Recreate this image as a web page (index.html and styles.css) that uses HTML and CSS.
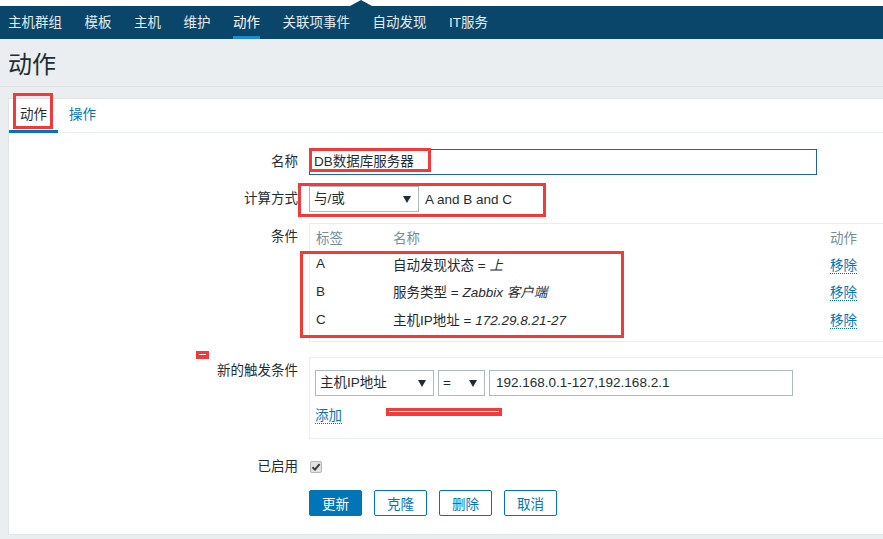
FILE: index.html
```html
<!DOCTYPE html>
<html lang="zh-CN">
<head>
    <meta charset="UTF-8">
    <title>动作</title>
    <link rel="stylesheet" href="styles.css">
</head>
<body>
    <div class="top-strip"></div>
    <nav class="menu">
        <a class="menu-item">主机群组</a>
        <a class="menu-item">模板</a>
        <a class="menu-item">主机</a>
        <a class="menu-item">维护</a>
        <a class="menu-item active">动作</a>
        <a class="menu-item">关联项事件</a>
        <a class="menu-item">自动发现</a>
        <a class="menu-item">IT服务</a>
    </nav>

    <div class="page-header">
        <h1>动作</h1>
    </div>

    <div class="panel">
        <div class="tabs">
            <a class="tab selected">动作</a>
            <a class="tab">操作</a>
        </div>

        <div class="form">
            <div class="form-row">
                <label class="form-label">名称</label>
                <div class="form-field">
                    <div class="text-input name-input focused">DB数据库服务器</div>
                </div>
            </div>

            <div class="form-row">
                <label class="form-label">计算方式</label>
                <div class="form-field inline">
                    <div class="select calc-select">与/或<span class="caret"></span></div>
                    <span class="formula">A and B and C</span>
                </div>
            </div>

            <div class="form-row">
                <label class="form-label top">条件</label>
                <div class="form-field">
                    <div class="box cond-table">
                        <div class="cond-head">
                            <span class="col-tag">标签</span>
                            <span class="col-name">名称</span>
                            <span class="col-act">动作</span>
                        </div>
                        <div class="cond-row">
                            <span class="col-tag">A</span>
                            <span class="col-name">自动发现状态 = <i>上</i></span>
                            <span class="col-act"><a class="link">移除</a></span>
                        </div>
                        <div class="cond-row">
                            <span class="col-tag">B</span>
                            <span class="col-name">服务类型 = <i>Zabbix 客户端</i></span>
                            <span class="col-act"><a class="link">移除</a></span>
                        </div>
                        <div class="cond-row">
                            <span class="col-tag">C</span>
                            <span class="col-name">主机IP地址 = <i>172.29.8.21-27</i></span>
                            <span class="col-act"><a class="link">移除</a></span>
                        </div>
                    </div>
                </div>
            </div>

            <div class="form-row new-cond-row">
                <label class="form-label top">新的触发条件</label>
                <div class="form-field">
                    <div class="box new-cond">
                        <div class="inline">
                            <div class="select type-select">主机IP地址<span class="caret"></span></div>
                            <div class="select op-select">=<span class="caret"></span></div>
                            <div class="text-input ip-input">192.168.0.1-127,192.168.2.1</div>
                        </div>
                        <div class="add-line"><a class="link">添加</a></div>
                    </div>
                </div>
            </div>

            <div class="form-row enabled-row">
                <label class="form-label">已启用</label>
                <div class="form-field">
                    <span class="checkbox">
                        <svg width="10" height="10" viewBox="0 0 10 10"><path d="M1.5 5.2 L4 7.6 L8.6 2.2" fill="none" stroke="#3a3a3a" stroke-width="2"/></svg>
                    </span>
                </div>
            </div>

            <div class="form-row buttons-row">
                <div class="form-label"></div>
                <div class="form-field inline buttons">
                    <button class="btn primary">更新</button>
                    <button class="btn">克隆</button>
                    <button class="btn">删除</button>
                    <button class="btn">取消</button>
                </div>
            </div>
        </div>
    </div>

    <!-- red marks drawn over the screenshot -->
    <div class="mark mark-tab"></div>
    <div class="mark mark-name"></div>
    <div class="mark mark-calc"></div>
    <div class="mark mark-rows"></div>
    <div class="mark-bar mark-small"></div>
    <div class="mark-bar mark-line"></div>
</body>
</html>
```

FILE: styles.css
```css
* {
    margin: 0;
    padding: 0;
    box-sizing: border-box;
}

body {
    position: relative;
    width: 883px;
    height: 539px;
    overflow: hidden;
    background-color: #ebeef0;
    font-family: "Liberation Sans", Arial, "Noto Sans CJK SC", sans-serif;
    font-size: 13.5px;
    color: #1f2c33;
}

.top-strip {
    height: 6px;
    background-color: #fff;
}

/* top menu */
.menu {
    position: relative;
    display: flex;
    gap: 22.5px;
    height: 33px;
    padding-left: 8px;
    background-color: #0a466a;
}

.menu::before {
    content: "";
    position: absolute;
    left: 350px;
    top: -6px;
    border-left: 11px solid transparent;
    border-right: 11px solid transparent;
    border-bottom: 6px solid #0a466a;
}

.menu-item {
    height: 33px;
    line-height: 32px;
    color: #e4ecf1;
    border-bottom: 3px solid transparent;
    padding-top: 1px;
}

.menu-item.active {
    color: #fff;
    border-bottom-color: #1f8ad1;
}

/* page title */
.page-header {
    height: 48px;
    padding: 5px 0 0 8px;
    border-bottom: 1px solid #dde2e5;
}

.page-header h1 {
    font-size: 24px;
    font-weight: normal;
    line-height: 42px;
    color: #1f2c33;
}

/* white panel */
.panel {
    margin: 11px -40px 0 8px;
    height: 437px;
    background-color: #fff;
    border: 1px solid #dfe4e7;
}

.tabs {
    display: flex;
    height: 34px;
    border-bottom: 1px solid #ebeef0;
}

.tab {
    height: 34px;
    line-height: 31px;
    padding: 0 11px;
    border-bottom: 3px solid transparent;
    color: #0275b8;
}

.tab + .tab {
    padding-left: 11px;
}

.tab.selected {
    color: #1f2c33;
    border-bottom-color: #0275b8;
}

/* form */
.form {
    padding-top: 16px;
}

.form-row {
    display: flex;
    align-items: center;
    margin-bottom: 11px;
}

.form-label {
    width: 289px;
    flex-shrink: 0;
    margin-right: 11px;
    text-align: right;
    line-height: 26px;
}

.form-label.top {
    align-self: flex-start;
    margin-top: 1px;
}

.form-field {
    flex: 1;
}

.inline {
    display: flex;
    align-items: center;
}

.text-input,
.select {
    height: 26px;
    line-height: 24px;
    border: 1px solid #acbbc2;
    padding: 0 5px;
    background-color: #fff;
    white-space: nowrap;
}

.name-input {
    width: 508px;
    padding-left: 4px;
}

.text-input.focused {
    border-color: #1f65a0;
}

.select {
    position: relative;
    padding-left: 4px;
}

.caret {
    position: absolute;
    right: 7px;
    top: 9px;
    border-left: 4px solid transparent;
    border-right: 4px solid transparent;
    border-top: 7px solid #1f2c33;
}

.calc-select {
    width: 110px;
}

.formula {
    margin-left: 6px;
}

/* condition lists */
.box {
    border: 1px solid #ebeef0;
}

.cond-table {
    height: 119px;
    padding-left: 6px;
}

.cond-head,
.cond-row {
    display: flex;
    align-items: center;
}

.cond-head {
    height: 26px;
    color: #768d99;
}

.cond-row {
    height: 28px;
}

.cond-row:nth-child(2) {
    height: 27px;
}

.col-tag {
    width: 77px;
}

.col-name {
    width: 437px;
}

.link {
    color: #0275b8;
    border-bottom: 1px dotted #0275b8;
}

.new-cond-row {
    margin-top: 15px;
}

.new-cond {
    height: 82px;
    padding: 12px 5px 0;
}

.type-select {
    width: 119px;
}

.op-select {
    width: 47px;
    margin-left: 4px;
}

.ip-input {
    width: 304px;
    margin-left: 4px;
    padding-left: 6px;
}

.add-line {
    margin-top: 11px;
    line-height: 18px;
}

.enabled-row {
    margin-top: 15px;
}

.checkbox {
    display: flex;
    align-items: center;
    justify-content: center;
    width: 12px;
    height: 12px;
    margin-left: 1px;
    margin-top: -1px;
    background-color: #e2e2e2;
    border: 1px solid #b5b5b5;
    border-radius: 2px;
}

.buttons-row {
    margin-top: -1px;
}

.buttons {
    gap: 12px;
}

.btn {
    width: 53px;
    height: 26px;
    border: 1px solid #0275b8;
    border-radius: 2px;
    background-color: #fff;
    color: #0275b8;
    font-family: inherit;
    font-size: 13.5px;
}

.btn.primary {
    background-color: #0275b8;
    color: #fff;
}

/* red annotation marks */
.mark {
    position: absolute;
    border: 3px solid #f23a3a;
}

.mark-tab {
    left: 13px;
    top: 93px;
    width: 40px;
    height: 36px;
}

.mark-name {
    left: 309px;
    top: 148px;
    width: 122px;
    height: 24px;
}

.mark-calc {
    left: 298px;
    top: 183px;
    width: 248px;
    height: 34px;
}

.mark-rows {
    left: 300px;
    top: 251px;
    width: 324px;
    height: 87px;
}

.mark-bar {
    position: absolute;
    background-color: #f23a3a;
    padding: 3px;
}

.mark-bar::after {
    content: "";
    display: block;
    height: 1px;
    background-color: #fff;
}

.mark-small {
    left: 196px;
    top: 351px;
    width: 13px;
    height: 8px;
}

.mark-line {
    left: 386px;
    top: 408px;
    width: 116px;
    height: 8px;
}
```
